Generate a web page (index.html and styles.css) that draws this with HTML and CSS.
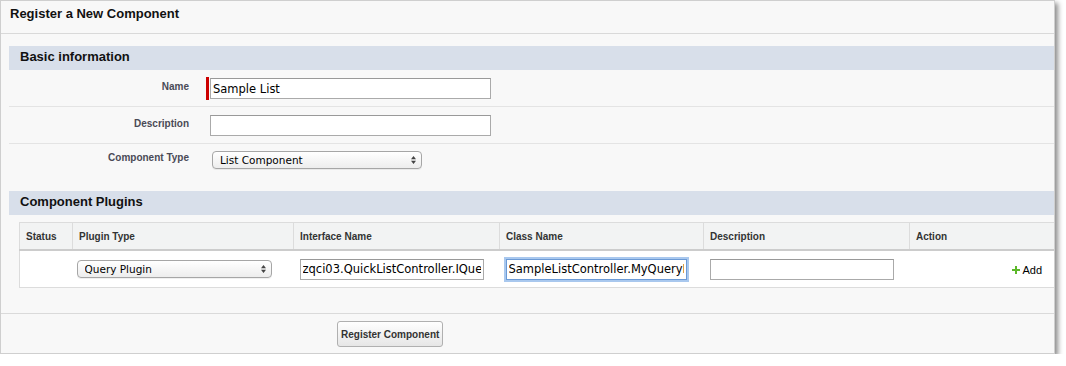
FILE: index.html
```html
<!DOCTYPE html>
<html lang="en">
<head>
  <meta charset="UTF-8">
  <title>Register a New Component</title>
  <link rel="stylesheet" href="styles.css">
</head>
<body>

<div class="panel">
  <div class="panel-title">Register a New Component</div>

  <div class="section">
    <h3 class="section-head">Basic information</h3>

    <div class="form-row">
      <label class="label">Name</label>
      <div class="field">
        <span class="required"></span>
        <input class="text" type="text" value="Sample List">
      </div>
    </div>

    <div class="form-row">
      <label class="label">Description</label>
      <div class="field">
        <span class="spacer"></span>
        <input class="text" type="text" value="">
      </div>
    </div>

    <div class="form-row last">
      <label class="label">Component Type</label>
      <div class="field">
        <span class="select-wrap type-select">
          <select>
            <option>List Component</option>
          </select>
          <svg class="arrows" width="5" height="8" viewBox="0 0 5 8"><path d="M0 3.2 L2.5 0 L5 3.2 Z M0 4.8 L2.5 8 L5 4.8 Z" fill="#444"/></svg>
        </span>
      </div>
    </div>
  </div>

  <div class="section plugins-section">
    <h3 class="section-head">Component Plugins</h3>

    <table class="plugins">
      <thead>
        <tr>
          <th class="c-status">Status</th>
          <th class="c-type">Plugin Type</th>
          <th class="c-iface">Interface Name</th>
          <th class="c-class">Class Name</th>
          <th class="c-desc">Description</th>
          <th class="c-action">Action</th>
        </tr>
      </thead>
      <tbody>
        <tr>
          <td></td>
          <td>
            <span class="select-wrap plugin-select">
              <select>
                <option>Query Plugin</option>
              </select>
              <svg class="arrows" width="5" height="8" viewBox="0 0 5 8"><path d="M0 3.2 L2.5 0 L5 3.2 Z M0 4.8 L2.5 8 L5 4.8 Z" fill="#444"/></svg>
            </span>
          </td>
          <td><input class="text cell-input" type="text" value="zqci03.QuickListController.IQueryPlugin"></td>
          <td><input class="text cell-input focused" type="text" value="SampleListController.MyQueryPlugin"></td>
          <td><input class="text cell-input" type="text" value=""></td>
          <td class="action">
            <a class="add" href="#">
              <svg width="8" height="8" viewBox="0 0 8 8"><path d="M3 0h2v3h3v2h-3v3h-2v-3h-3v-2h3z" fill="#5cb82a"/></svg>Add</a>
          </td>
        </tr>
      </tbody>
    </table>
  </div>

  <div class="footer">
    <button class="btn">Register Component</button>
  </div>
</div>

</body>
</html>
```

FILE: styles.css
```css
body {
  margin: 0;
  background: #fff;
  font-family: "Liberation Sans", Arial, sans-serif;
  color: #222;
}
.panel {
  width: 1053px;
  background: #f8f8f8;
  border: 1px solid #cfcfcf;
  box-shadow: 3px 3px 5px rgba(0,0,0,0.45);
}
.panel-title {
  height: 32px;
  line-height: 26px;
  padding-left: 9px;
  font-size: 13px;
  font-weight: bold;
  color: #111;
  border-bottom: 1px solid #d9d9d9;
}
.section {
  margin: 12px 0 0 8px;
}
.plugins-section {
  margin-top: 15px;
}
.section-head {
  margin: 0;
  height: 24px;
  line-height: 22px;
  padding-left: 11px;
  background: #d8dfea;
  font-size: 13px;
  font-weight: bold;
  color: #111;
}
.form-row {
  display: flex;
  padding: 8px 0 7px;
  border-bottom: 1px solid #e4e4e4;
}
.form-row.last {
  padding-top: 7px;
  border-bottom: none;
}
.label {
  width: 180px;
  text-align: right;
  padding-top: 2px;
  line-height: 14px;
  font-size: 10px;
  font-weight: bold;
  color: #4a4a56;
}
.last .label {
  padding-top: 0;
}
.field {
  display: flex;
  align-items: center;
  height: 21px;
  margin-left: 17px;
}
.last .field {
  height: 18px;
}
.required {
  width: 3px;
  height: 23px;
  background: #c00;
  margin-right: 1px;
}
.spacer {
  width: 4px;
}
.text {
  box-sizing: border-box;
  width: 281px;
  height: 21px;
  margin: 0;
  padding: 0 2px;
  border: 1px solid #aaa;
  border-top-color: #999;
  background: #fff;
  font-family: "DejaVu Sans", sans-serif;
  font-size: 11.5px;
  color: #000;
}
.select-wrap {
  position: relative;
  display: inline-block;
  height: 18px;
}
.select-wrap select {
  appearance: none;
  -webkit-appearance: none;
  box-sizing: border-box;
  height: 18px;
  margin: 0;
  padding: 0 18px 0 7px;
  border: 1px solid #a6a6a6;
  border-radius: 4px;
  background: linear-gradient(#ffffff, #ededed);
  box-shadow: 0 1px 0 rgba(0,0,0,0.06);
  font-family: "DejaVu Sans", sans-serif;
  font-size: 10.5px;
  color: #000;
  vertical-align: top;
}
.select-wrap .arrows {
  position: absolute;
  right: 6px;
  top: 5px;
}
.type-select {
  margin-left: 6px;
}
.type-select select {
  width: 210px;
}
.plugin-select select {
  width: 195px;
}
.plugins {
  margin: 7px 0 0 10px;
  width: calc(100% - 10px);
  border-collapse: collapse;
  table-layout: fixed;
}
.plugins th {
  height: 26px;
  padding: 0 6px;
  text-align: left;
  font-size: 10px;
  font-weight: bold;
  color: #333;
  background: #f2f3f3;
  border-top: 1px solid #dcdcdc;
  border-left: 1px solid #dcdcdc;
  border-bottom: 2px solid #cccccc;
}
.plugins td {
  height: 36px;
  padding: 0;
  background: #fff;
  border-bottom: 1px solid #dcdcdc;
  vertical-align: middle;
}
.plugins td:first-child {
  border-left: 1px solid #dcdcdc;
}
.c-status { width: 40px; }
.c-type { width: 208px; }
.c-iface { width: 193px; }
.c-class { width: 191px; }
.c-desc { width: 193px; }
.plugin-select {
  margin-left: 4px;
}
.cell-input {
  width: 184px;
  margin-left: 6px;
}
.cell-input.focused {
  width: 181px;
  border: 1px solid #6b9ad6;
  box-shadow: 0 0 0 2px #a9c8ee;
  outline: none;
}
.action {
  text-align: right;
  padding-right: 12px !important;
}
.add {
  font-size: 11px;
  color: #000;
  text-decoration: none;
}
.add svg {
  margin-right: 2px;
}
.footer {
  margin-top: 25px;
  padding: 7px 0 6px 336px;
  border-top: 1px solid #dadada;
}
.btn {
  height: 26px;
  padding: 0 3px;
  border: 1px solid #b0b0b0;
  border-radius: 3px;
  background: linear-gradient(#ffffff, #e6e6e6);
  font-family: "Liberation Sans", Arial, sans-serif;
  font-size: 10px;
  font-weight: bold;
  color: #333;
}
```
